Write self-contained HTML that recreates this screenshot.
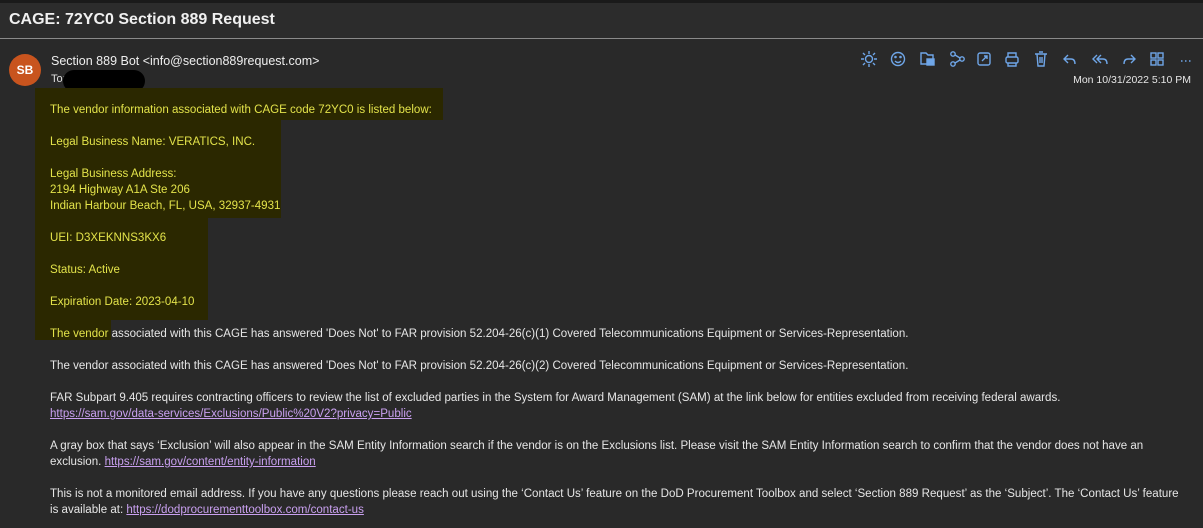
<!DOCTYPE html>
<html><head><meta charset="utf-8"><style>
body{margin:0;width:1203px;height:528px;background:#292929;overflow:hidden;font-family:"Liberation Sans",sans-serif;position:relative;color:#e6e6e6}
.t{position:absolute;left:50px;font-size:11.55px;white-space:nowrap;line-height:14px}
.y{color:#e3e34a}
a{color:#c9a0f0;text-decoration:underline}
.hl{position:absolute;background:#2b2800}
</style></head><body>
<div style="position:absolute;left:0;top:0;width:1203px;height:38px;background:#2c2c2c;border-top:3px solid #1a1a1a;box-sizing:border-box"></div>
<div style="position:absolute;left:0;top:38px;width:1203px;height:1px;background:#8a8a8a"></div>
<div style="position:absolute;left:9px;top:11px;font-size:16px;font-weight:bold;color:#f0f0f0">CAGE: 72YC0 Section 889 Request</div>
<div style="position:absolute;left:9px;top:54px;width:32px;height:32px;border-radius:50%;background:#c8541e;color:#fff;font-size:12px;font-weight:bold;text-align:center;line-height:32px">SB</div>
<div style="position:absolute;left:51px;top:54px;font-size:12.5px;color:#eee">Section 889 Bot &lt;info@section889request.com&gt;</div>
<div style="position:absolute;left:51px;top:73px;font-size:11px;color:#ddd">To:</div>
<div style="position:absolute;left:63px;top:70px;width:82px;height:22px;border-radius:11px;background:#000"></div>
<div style="position:absolute;right:12px;top:74px;font-size:10.5px;color:#e6e6e6">Mon 10/31/2022 5:10 PM</div>
<svg style="position:absolute;left:855px;top:48px" width="340" height="22" fill="none" stroke="#6fa6e8" stroke-width="1.4">
<circle cx="14" cy="11" r="3.5"/><path d="M14 3v3M14 16v3M6 11h3M19 11h3M8 5l2 2M18 15l2 2M8 17l2-2M18 7l2-2"/>
<circle cx="43" cy="11" r="6.5"/><path d="M40 13q3 3 6 0"/><circle cx="40.5" cy="9" r=".6"/><circle cx="45.5" cy="9" r=".6"/>
<path d="M66 5h5l2 2h5v9H66z"/><rect x="72" y="11" width="7" height="6" fill="#6fa6e8"/>
<circle cx="98" cy="6" r="2.2"/><circle cx="98" cy="16" r="2.2"/><circle cx="107" cy="11" r="2.2"/><path d="M100 7l5 3M100 15l5-3"/>
<rect x="123" y="5" width="12" height="12" rx="2"/><path d="M127 13l5-5M129 8h3v3"/>
<rect x="151" y="9" width="12" height="6" rx="1.5"/><path d="M153 9V5h8v4M153 15v3h8v-3"/>
<path d="M180 6h12M182 6l1 12h6l1-12M184 4h4M185 9v6M187 9v6"/>
<path d="M213 7l-4 4 4 4M209 11h7q4 0 4 5"/>
<path d="M242 7l-4 4 4 4M246 7l-4 4 4 4M242 11h6q4 0 4 5"/>
<path d="M276 7l4 4-4 4M280 11h-7q-4 0-4 5"/>
<rect x="296" y="5" width="5" height="5"/><rect x="303" y="5" width="5" height="5"/><rect x="296" y="12" width="5" height="5"/><rect x="303" y="12" width="5" height="5"/>
<path d="M326 13h1.5M330 13h1.5M334 13h1.5"/>
</svg>
<div class="hl" style="left:35px;top:88px;width:408px;height:32px"></div>
<div class="hl" style="left:35px;top:118px;width:246px;height:100px"></div>
<div class="hl" style="left:35px;top:218px;width:173px;height:102px"></div>
<div class="hl" style="left:35px;top:320px;width:76px;height:20px"></div>
<div class="t y" style="top:103px">The vendor information associated with CAGE code 72YC0 is listed below:</div>
<div class="t y" style="top:135px">Legal Business Name: VERATICS, INC.</div>
<div class="t y" style="top:167px">Legal Business Address:</div>
<div class="t y" style="top:183px">2194 Highway A1A Ste 206</div>
<div class="t y" style="top:199px">Indian Harbour Beach, FL, USA, 32937-4931</div>
<div class="t y" style="top:231px">UEI: D3XEKNNS3KX6</div>
<div class="t y" style="top:263px">Status: Active</div>
<div class="t y" style="top:295px">Expiration Date: 2023-04-10</div>
<div class="t" style="top:327px"><span class="y">The vendor</span> associated with this CAGE has answered 'Does Not' to FAR provision 52.204-26(c)(1) Covered Telecommunications Equipment or Services-Representation.</div>
<div class="t" style="top:359px">The vendor associated with this CAGE has answered 'Does Not' to FAR provision 52.204-26(c)(2) Covered Telecommunications Equipment or Services-Representation.</div>
<div class="t" style="top:391px">FAR Subpart 9.405 requires contracting officers to review the list of excluded parties in the System for Award Management (SAM) at the link below for entities excluded from receiving federal awards.</div>
<div class="t" style="top:407px"><a>https://sam.gov/data-services/Exclusions/Public%20V2?privacy=Public</a></div>
<div class="t" style="top:439px">A gray box that says ‘Exclusion’ will also appear in the SAM Entity Information search if the vendor is on the Exclusions list. Please visit the SAM Entity Information search to confirm that the vendor does not have an</div>
<div class="t" style="top:455px">exclusion. <a>https://sam.gov/content/entity-information</a></div>
<div class="t" style="top:487px">This is not a monitored email address. If you have any questions please reach out using the ‘Contact Us’ feature on the DoD Procurement Toolbox and select ‘Section 889 Request’ as the ‘Subject’. The ‘Contact Us’ feature</div>
<div class="t" style="top:503px">is available at: <a>https://dodprocurementtoolbox.com/contact-us</a></div>
</body></html>
